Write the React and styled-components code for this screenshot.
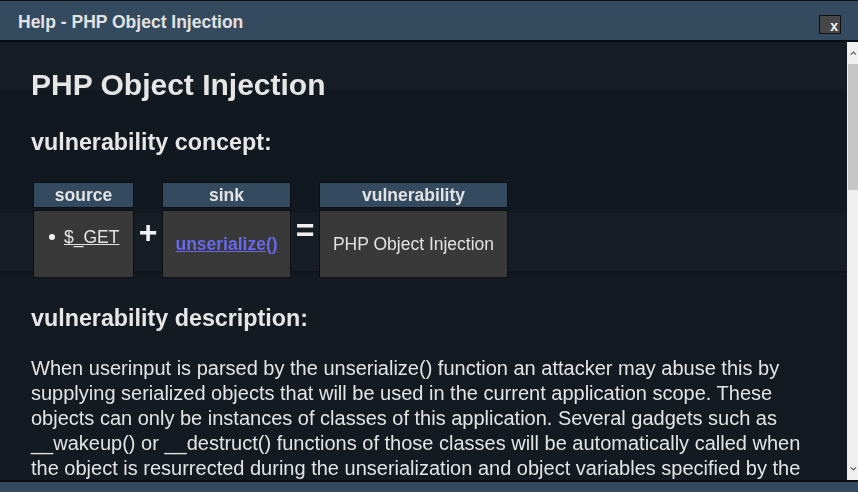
import React from "react";
import styled, { createGlobalStyle } from "styled-components";

const GlobalStyle = createGlobalStyle`
  html, body {
    margin: 0;
    padding: 0;
    background: #131a21;
    overflow: hidden;
  }
  #root {
    height: 100vh;
  }
`;

// the code page that shows faintly through the help dialog
const Page = styled.div`
  height: 100vh;
  display: flex;
  flex-direction: column;
  font-family: "Liberation Mono", "DejaVu Sans Mono", monospace;
  font-size: 14.5px;
  color: rgba(255, 255, 255, 0.022);
`;

const Band = styled.div`
  flex: ${(p) => (p.$grow ? "1" : `0 0 ${p.$h}px`)};
  background: ${(p) => p.$bg};
  padding-top: ${(p) => p.$pad || 0}px;
  line-height: ${(p) => p.$lh || 28}px;
  white-space: pre;
  overflow: hidden;
  box-sizing: border-box;
`;

const Dialog = styled.div`
  position: fixed;
  inset: 0;
  display: flex;
  flex-direction: column;
  font-family: "Liberation Sans", Arial, sans-serif;
  color: #e4e4e4;
`;

const TitleBar = styled.div`
  flex: 0 0 auto;
  height: 39px;
  border-top: 1px solid #0a0e12;
  border-bottom: 2px solid #0a0e12;
  background: #344a5f;
  display: flex;
  align-items: center;
  justify-content: space-between;
  padding: 0 17px 0 18px;
  font-size: 17.5px;
  font-weight: 700;
  color: #e2e2e2;
`;

const Title = styled.span`
  margin-top: 3px;
`;

const CloseButton = styled.div`
  width: 22px;
  height: 19px;
  box-sizing: border-box;
  margin-top: 7px;
  background: #474747;
  border: 1px solid #111;
  display: flex;
  align-items: flex-end;
  justify-content: flex-end;
  padding: 0 2px 0 0;
  font-size: 14px;
  font-weight: 700;
  line-height: 1;
  color: #f2f2f2;
`;

const Body = styled.div`
  flex: 1;
  min-height: 0;
  display: flex;
`;

const Content = styled.div`
  flex: 1;
  overflow: hidden;
  padding: 25px 0 0 31px;
`;

const Heading = styled.h1`
  margin: 0;
  font-size: 30px;
  line-height: 36px;
  font-weight: 700;
  color: #e6e6e6;
`;

const SubHeading = styled.h2`
  margin: ${(p) => p.$gap}px 0 0;
  font-size: 23.3px;
  line-height: 28px;
  font-weight: 700;
  color: #e6e6e6;
`;

const Concept = styled.div`
  margin: 26px 0 0 2px;
  display: grid;
  grid-template-columns: 101px 28px 129px 28px 189px;
  grid-template-rows: 26px 68px;
  row-gap: 2px;
  font-size: 17.5px;
`;

const HeadCell = styled.div`
  grid-column: ${(p) => p.$col};
  grid-row: 1;
  background: #344a5f;
  border: 1px solid #0b0f13;
  box-sizing: border-box;
  text-align: center;
  line-height: 24px;
  font-weight: 700;
  color: #e2e2e2;
`;

const BodyCell = styled.div`
  grid-column: ${(p) => p.$col};
  grid-row: 2;
  background: #393939;
  border: 1px solid #0b0f13;
  box-sizing: border-box;
  display: flex;
  align-items: ${(p) => (p.$top ? "flex-start" : "center")};
  justify-content: ${(p) => (p.$top ? "flex-start" : "center")};
  color: #e2e2e2;
`;

const Operator = styled.div`
  grid-column: ${(p) => p.$col};
  grid-row: 2;
  padding-top: ${(p) => p.$offset}px;
  text-align: center;
  font-size: 32px;
  line-height: 32px;
  font-weight: 700;
  color: #f0f0f0;
`;

const SourceList = styled.ul`
  margin: 0;
  padding: 16px 0 0 15px;
  list-style: none;
  & > li {
    display: flex;
    align-items: center;
    gap: 9px;
    line-height: 20px;
  }
  & > li::before {
    content: "";
    width: 6px;
    height: 6px;
    border-radius: 50%;
    background: #f0f0f0;
  }
`;

const Link = styled.a`
  color: ${(p) => (p.$sink ? "#6868ee" : "#e4e4e4")};
  font-weight: ${(p) => (p.$sink ? 700 : 400)};
  text-decoration: underline;
  cursor: pointer;
`;

const Description = styled.p`
  margin: 24px 0 0;
  width: 800px;
  font-size: 20px;
  line-height: 25px;
  color: #e4e4e4;
`;

const ScrollBar = styled.div`
  flex: 0 0 11px;
  background: #f0f0f0;
  display: flex;
  flex-direction: column;
  overflow: hidden;
`;

const ScrollButton = styled.div`
  flex: 0 0 22px;
  display: flex;
  align-items: center;
  & svg {
    display: block;
    margin-left: 3px;
  }
`;

const Thumb = styled.div`
  flex: 0 0 126px;
  margin-left: 1px;
  background: #c6c6c6;
`;

const Track = styled.div`
  flex: 1;
`;

const BottomBar = styled.div`
  flex: 0 0 10px;
  border-top: 2px solid #0a0e12;
  background: #344a5f;
`;

const Chevron = ({ down }) => (
  <svg width="12" height="8" viewBox="0 0 12 8">
    <path
      d={down ? "M1 1.5 L5 5.5 L9 1.5" : "M1 6.5 L5 2.5 L9 6.5"}
      fill="none"
      stroke="#5a5a5a"
      strokeWidth="1.6"
    />
  </svg>
);

const App = () => {
  return (
    <>
      <GlobalStyle />
      <Page>
        <Band $h={42} $bg="#344a5f" />
        <Band $h={48} $bg="#161d25" />
        <Band $h={123} $bg="#111820" $pad={39}>
          {"information press the description on the left side.\n      $data = unserialize($_GET['user_serialized']);"}
        </Band>
        <Band $h={58} $bg="#161d25" />
        <Band $h={2} $bg="#0e141a" />
        <Band $grow $bg="#141a21" $pad={94} $lh={30}>
          {"information press the description on the left side.\n  echo $data->user;\n      $data = unserialize($_GET['user_serialized']);"}
        </Band>
      </Page>

      <Dialog>
        <TitleBar>
          <Title>Help - PHP Object Injection</Title>
          <CloseButton>x</CloseButton>
        </TitleBar>
        <Body>
          <Content>
            <Heading>PHP Object Injection</Heading>
            <SubHeading $gap={25}>vulnerability concept:</SubHeading>
            <Concept>
              <HeadCell $col={1}>source</HeadCell>
              <HeadCell $col={3}>sink</HeadCell>
              <HeadCell $col={5}>vulnerability</HeadCell>
              <BodyCell $col={1} $top>
                <SourceList>
                  <li>
                    <Link>$_GET</Link>
                  </li>
                </SourceList>
              </BodyCell>
              <Operator $col={2} $offset={6}>
                +
              </Operator>
              <BodyCell $col={3}>
                <Link $sink>unserialize()</Link>
              </BodyCell>
              <Operator $col={4} $offset={4}>
                =
              </Operator>
              <BodyCell $col={5}>PHP Object Injection</BodyCell>
            </Concept>
            <SubHeading $gap={26}>vulnerability description:</SubHeading>
            <Description>
              When userinput is parsed by the unserialize() function an attacker
              may abuse this by supplying serialized objects that will be used in
              the current application scope. These objects can only be instances
              of classes of this application. Several gadgets such as __wakeup()
              or __destruct() functions of those classes will be automatically
              called when the object is resurrected during the unserialization
              and object variables specified by the attacker are used within
              these functions.
            </Description>
          </Content>
          <ScrollBar>
            <ScrollButton>
              <Chevron />
            </ScrollButton>
            <Thumb />
            <Track />
            <ScrollButton>
              <Chevron down />
            </ScrollButton>
          </ScrollBar>
        </Body>
        <BottomBar />
      </Dialog>
    </>
  );
};

export default App;
